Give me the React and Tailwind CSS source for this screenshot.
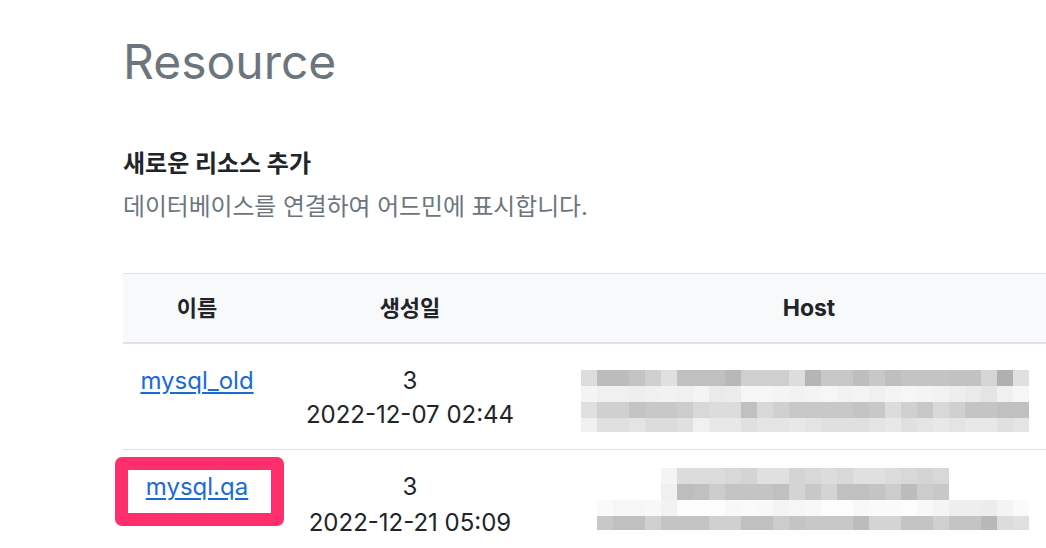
import React from "react";

const FONT = { fontFamily: "Inter, 'Noto Sans CJK KR', sans-serif" };

const M1 = [
  "dd bc bc c4 d0 e0 c0 c0 c0 b8 cf cf cf dd b5 c8 c8 be c8 bf c4 c4 c4 c2 c2 d5 b0 e0",
  "f4 f0 f0 ee f0 f2 f0 f4 ea ec f6 f6 f4 f2 f4 f6 f2 f4 f0 f4 f6 f4 f2 ee ea e4 f0 f6",
  "e0 d0 d0 c4 c8 c8 cc d8 dc dc c0 d8 d0 c8 c8 c8 c8 c4 c8 dc d0 c8 d8 d0 c4 c4 c0 c0",
  "f0 e0 e0 e4 dc dc e0 f0 e8 e8 e0 e4 e4 e8 e4 e0 e0 e0 e4 e8 e0 e4 e8 e4 e8 e8 e0 e4",
];

const M2 = [
  "-- -- -- -- -- f4 dc dc dc d8 d4 e0 e0 d4 d8 dc d8 e0 e0 dc d8 d4 d8 -- -- -- -- --",
  "-- -- -- -- -- f0 bd c0 cc c4 c4 c4 c0 d4 c8 d4 c0 c0 c4 cc bc cc c8 -- -- -- -- --",
  "-- fa f6 f6 f8 f2 fc fc fc f8 fa f8 f4 f6 f8 fc fc f8 fa fa fc f8 f4 ee ee ec f4 fa",
  "-- c8 c0 c0 d0 c4 c4 c4 d0 d0 c0 c0 cc c4 c8 c8 c8 bc d4 d4 c4 c4 d0 c4 c4 b8 dc e0",
];

const ROW_H = [16, 16, 16, 14];

function Mosaic({ data }) {
  let y = 0;
  const rects = [];
  data.forEach((row, ri) => {
    const cells = row.split(" ");
    cells.forEach((c, ci) => {
      if (c === "--") return;
      rects.push(
        <rect
          key={`${ri}-${ci}`}
          x={ci * 16}
          y={y}
          width={16}
          height={ROW_H[ri]}
          fill={`#${c}${c}${c}`}
        />
      );
    });
    y += ROW_H[ri];
  });
  return (
    <svg width="448" height="62" viewBox="0 0 448 62" className="block" shapeRendering="crispEdges">
      {rects}
    </svg>
  );
}

export default function App() {
  return (
    <div className="w-[1046px] h-[548px] overflow-hidden bg-white pl-[123px]" style={FONT}>
      <h1 className="pt-[33px] text-[48px] leading-[58px] text-[#6c757d]">Resource</h1>
      <h2 className="mt-[57px] text-[24px] font-bold leading-[32px] text-[#212529]">
        새로운 리소스 추가
      </h2>
      <p className="mt-[11px] text-[23.8px] leading-[32px] text-[#6c757d]">
        데이터베이스를 연결하여 어드민에 표시합니다.
      </p>
      <table className="mt-[50px] w-[946px] table-fixed border-collapse text-[24px] leading-[34px] text-[#212529]">
        <colgroup>
          <col className="w-[148px]" />
          <col className="w-[278px]" />
          <col className="w-[520px]" />
        </colgroup>
        <thead>
          <tr className="bg-[#f8f9fa] border-t border-b-2 border-[#dee2e6]">
            <th className="py-[17px] text-center text-[22px] font-bold">이름</th>
            <th className="py-[17px] text-center text-[22px] font-bold">생성일</th>
            <th className="py-[17px] text-center text-[23px] font-bold">Host</th>
          </tr>
        </thead>
        <tbody>
          <tr className="border-b border-[#dee2e6]">
            <td className="align-top pt-[20px] pb-[17px] text-center">
              <a href="#" className="text-[#1a6ad8] underline underline-offset-[3px]">mysql_old</a>
            </td>
            <td className="align-top pt-[20px] pb-[17px] text-center">
              <div>3</div>
              <div>2022-12-07 02:44</div>
            </td>
            <td className="align-top pt-[26px] pl-[32px]">
              <Mosaic data={M1} />
            </td>
          </tr>
          <tr className="border-b border-[#dee2e6]">
            <td className="relative align-top pt-[20px] pb-[19px] text-center">
              <div className="absolute left-[-8px] top-[7px] w-[169px] h-[69px] rounded-[7px] border-[13px] border-[#fe2f6c]" />
              <a href="#" className="relative text-[#1a6ad8] underline underline-offset-[3px]">mysql.qa</a>
            </td>
            <td className="align-top pt-[20px] pb-[19px] text-center">
              <div>3</div>
              <div className="leading-[37px]">2022-12-21 05:09</div>
            </td>
            <td className="align-top pt-[18px] pl-[32px]">
              <Mosaic data={M2} />
            </td>
          </tr>
        </tbody>
      </table>
    </div>
  );
}
